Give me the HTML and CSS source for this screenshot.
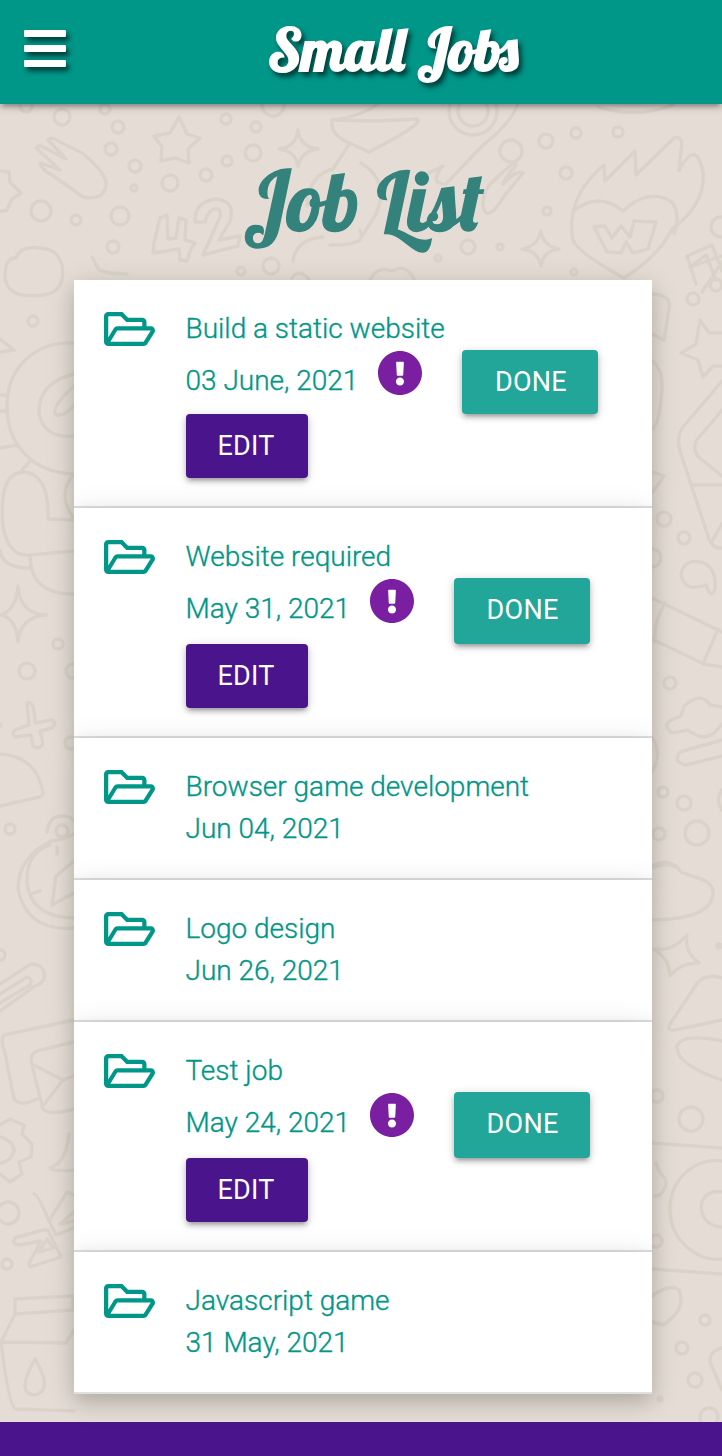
FILE: index.html
```
<!DOCTYPE html>
<html lang="en">
<head>
<meta charset="utf-8">
<title>Small Jobs</title>
<link rel="stylesheet" href="styles.css">
</head>
<body>
<svg class="doodles" width="722" height="1422" viewBox="0 0 722 1422" aria-hidden="true">
  <!-- dots and rings -->
  <circle cx="26" cy="106" r="6"/><circle cx="62" cy="117" r="8"/><circle cx="105" cy="109" r="5"/><circle cx="118" cy="127" r="6"/><circle cx="111" cy="149" r="6"/><circle cx="135" cy="166" r="6"/><circle cx="134" cy="188" r="3"/><circle cx="170" cy="183" r="8"/><circle cx="206" cy="175" r="6"/><circle cx="227" cy="161" r="5"/><circle cx="253" cy="153" r="8"/><circle cx="256" cy="127" r="5"/><circle cx="226" cy="119" r="5"/><circle cx="273" cy="105" r="11"/><circle cx="41" cy="211" r="10"/><circle cx="76" cy="220" r="5"/><circle cx="120" cy="216" r="9"/><circle cx="113" cy="247" r="6"/><circle cx="271" cy="266" r="8"/><circle cx="241" cy="271" r="4"/>
  <circle cx="511" cy="151" r="11"/><circle cx="546" cy="141" r="7"/><circle cx="576" cy="133" r="5"/><circle cx="618" cy="132" r="5"/><circle cx="566" cy="173" r="6"/><circle cx="547" cy="211" r="4"/><circle cx="468" cy="247" r="7"/><circle cx="500" cy="247" r="3"/><circle cx="438" cy="258" r="3"/><circle cx="721" cy="227" r="10"/><circle cx="574" cy="272" r="3"/>
  <circle cx="473" cy="111" r="24"/><circle cx="473" cy="111" r="15"/>
  <circle cx="33" cy="321" r="5"/><circle cx="58" cy="644" r="5"/><circle cx="27" cy="671" r="8"/><circle cx="73" cy="671" r="7"/><circle cx="71" cy="743" r="6"/><circle cx="10" cy="829" r="5"/><circle cx="0" cy="955" r="5"/><circle cx="8" cy="1213" r="11"/><circle cx="7" cy="1264" r="5"/><circle cx="0" cy="725" r="1"/>
  <circle cx="664" cy="519" r="7"/><circle cx="684" cy="538" r="6"/><circle cx="652" cy="558" r="9"/><circle cx="670" cy="683" r="6"/><circle cx="663" cy="792" r="5"/><circle cx="684" cy="803" r="7"/><circle cx="697" cy="833" r="12"/><circle cx="659" cy="834" r="6"/><circle cx="657" cy="1096" r="6"/><circle cx="691" cy="1119" r="12"/><circle cx="656" cy="1241" r="6"/><circle cx="705" cy="1320" r="5"/><circle cx="682" cy="1348" r="6"/><circle cx="695" cy="1380" r="7"/><circle cx="709" cy="1417" r="9"/><circle cx="660" cy="1399" r="2"/><circle cx="719" cy="946" r="2"/>
  <!-- top band -->
  <path d="M179 117l8 17 13 4-12 11 1 14-14-5-14 3 1-14-8-11 16-3zM298 130q2 17 20 19-17 2-20 18-2-16-19-18 17-2 19-19zM541 231q2 15 18 18-16 2-18 17-3-15-19-17 16-3 19-18z"/>
  <path d="M48 140q4-4 10 1l24 12q26 21 24 33-3 15-23 11L52 175q-10-5-12-12l20 7-24-22q3-4 9 0l21 11zM-4 170l13 2 1 10 11 11-9 6-5 11-9 2"/>
  <path d="M5 274q1-17 11-16 5-13 23-10 18 0 23 17 4 27-18 30-40 5-39-21zM92 257l7 13 10 3 18 1M160 218l7-3 1 24 8-1 3-20 7 2-1 20 10 3-4 6-4 12-7-1-1-11-26 4 1-10zM195 222q-1-20 21-23 20 2 14 22l-11 19 21-4-2 10-35 9 17-38q2-9-5-8-7 1-10 13z"/>
  <path d="M332 120q29-3 47-17M332 120q-2 13 13 21l24 11q60-31 47-33-35 3-84 1M350 143l-17 26q-20 5-25 27l-1 10M293 261q3-22 30-24M361 163q29 18 15 51l-17 27M518 103l-1 3q-7 18-35 40l-36 38q-18 0-3-18l-27 13M330 245q38 1 30-15"/>
  <path d="M483 205q-1-14 12-26l16-14q10-4 0 6l-8 12q17-14 20-10l-18 22q-19 31-22 10zM493 182l12-12M503 184l12-11M598 107q38 12 75-2"/>
  <path d="M573 240q-8-42 31-75l1 16 30-30 1 24 38-37q10-3 7 12l-2 21q17-33 24 1 3 32-31 57-12 26-48 49-47-26-51-38zM573 211q26-20 50 0 25-24 49-9 9 14 2 32M594 227l11-1 7 12 9-12 9 11 4-16 22 1-8 27-15 4-7-11-5 11-14-1zM690 267l16-12 10 25M702 292l22-33"/>
  <path d="M370 280q8-15 22-9 14-8 22 8M292 278q6-10 17 1"/>
  <!-- left margin -->
  <path d="M0 339l14 11-14 2M74 343C38 341 7 365 7 406s28 67 67 68M74 374Q38 383 39 413q5 26 35 23M74 386q-24 22-18 29 9 2 18-10M0 395h7M0 411h8M0 448l17-3M31 460l-9 10M0 550Q2 568 30 568M74 551l-44 4Q8 557 3 526q-5-55 22-54 24 3 23 47l26 1M30 555q0 40 44 39M74 474q-18 20 0 45"/>
  <path d="M18 586q2 28 28 29-26 2-28 27-2-25-18-27 16-4 18-29zM27 703q8-2 8 20l16-3q7 2 1 8l-12 3 3 12q-3 8-10 3l-2-11-15 2q-7-4 1-8l12-4zM0 754q36 2 43 38 1 4-4 5L0 806"/>
  <path d="M47 832q2-16 15-16 9 0 12 5M51 841Q18 857 18 889q9 43 56 39M51 841q12-1 23-7M27 882q-1-29 23-37M27 882q3 35 47 36M74 861l-18 15-4 29 22-12M57 847v7M31 894l9-3"/>
  <circle cx="62" cy="831" r="6"/>
  <path d="M0 984l31-20q15 0 13 15-2 5-9 7L0 1011M0 994l27-17q6 2 3 8L0 1003M74 1020L4 1035q-4 4 1 18l9 46q6 8 23 0M74 1042l-37 9q-8 3-5 14l11 44q6 7 31 0M34 1065l29 15 11-4M63 1080l-21 27"/>
  <path d="M0 1125l10-6 14 6-2 9 10 10-1 13-12 5 3 12-12 8-10-8M0 1137q14 4 14 14-3 11-14 12M74 1170q-20 2-24-2 16-5 19-34"/>
  <path d="M34 1194q4 0 15 27l18-29 7 3M49 1221l7 14 18-7M43 1230l-28 8q-4 6 4 7l22-4-12 22q0 5 4 3l28-9-13-27zM47 1239l-8 13 14-4zM74 1212l-14 12 14-3M15 1299l58-3v14l-58 4zM15 1314L1 1342q8 66 15 67l58 2M1 1342l65 1 8-13M35 1359q-20 35 0 36 19-5 0-36z"/>
  <!-- right margin -->
  <path d="M696 284l-9-28 25-11 10 26M693 266l29-10M652 294q20 1 17 15l-5 31-12-6M652 361q11 8 10 26-2 38-10 42M652 472l12 4-12 17M700 320l9 13h14M700 320l-4 24-15 9 17 7 5 17 10-11h9"/>
  <circle cx="693" cy="299" r="6"/><circle cx="716" cy="285" r="6"/>
  <path d="M722 381l-39 46q-8 11-2 27l28 85q4 10 13 9M722 410l-26 31q-4 11 5 18l21 17M691 485h31M722 524l-10 17M681 574q4-17 23-11 13 7 11 26-4 11-9-4-22 8-25-11zM652 598l70 34M665 603q-12 20-10 39M652 639l52 25 18 3M718 629l-15 35"/>
  <path d="M722 707l-12-2q-9-14-26 1l-3 10-10 4q-9 5 1 13l16-3q18 14 30-1l4-5M722 740l-42 12q-8 10 6 13l36-9M652 738q11 15 0 34M722 790q-7 10 0 20M652 866q12-7 24 0M652 868q22-8 29 4l14 5q19 5 18 17-2 25-61 26"/>
  <path d="M687 935q-3 17 12 28-19 0-29 13 0-16-16-27 19 3 33-14zM722 978q-15-5-24 4l-28 42q-4 7 5 6l47-10M722 1041q-40-8-45 5-2 18 45 34M652 1143l70 5M722 1161c-24-4-52 16-52 48s28 53 52 50M722 1192q-19-2-21 15 2 19 21 20M652 1269l70 5M652 1296q18-13 27-6 8 19-16 35l-11-3M722 1348q-13 3-12 14l12 28M656 1163l4 10q12 9 0 22l-5 1"/>
</svg>
<header class="navbar">
  <svg class="menu-icon" width="42" height="37" viewBox="0 0 42 37"><rect width="42" height="7" rx="1.3"/><rect y="15" width="42" height="7" rx="1.3"/><rect y="30" width="42" height="7" rx="1.3"/></svg>
  <svg class="brand" width="252" height="84" viewBox="0 0 252 84"><text x="-1" y="70.500" textLength="250" lengthAdjust="spacingAndGlyphs">Small Jobs</text></svg>
</header>
<main>
  <h1><svg class="page-title" width="240" height="90" viewBox="0 0 240 90"><text x="0" y="66" textLength="239.500" lengthAdjust="spacingAndGlyphs">Job List</text></svg></h1>
  <svg width="0" height="0" class="symbols">
    <symbol id="folder" viewBox="0 64 576 384"><path d="M527.9 224H480v-48c0-26.5-21.5-48-48-48H272l-64-64H48C21.5 64 0 85.5 0 112v288c0 26.5 21.5 48 48 48h400c16.5 0 31.9-8.5 40.7-22.6l79.9-128c20-31.9-3-73.4-40.7-73.4zM48 118c0-3.3 2.7-6 6-6h134.1l64 64H426c3.3 0 6 2.7 6 6v42H152c-16.8 0-32.4 8.8-41.1 23.2L48 351.4zm400 282H72l77.2-128H528z"/></symbol>
    <symbol id="alert" viewBox="8 8 496 496"><path d="M504 256c0 137-111 248-248 248S8 393 8 256C8 119 119 8 256 8s248 111 248 248zm-248 50c-25.4 0-46 20.600-46 46s20.600 46 46 46 46-20.600 46-46-20.600-46-46-46zm-43.700-165.300l7.400 136c.4 6.300 5.600 11.300 12 11.300h48.600c6.300 0 11.600-5 12-11.300l7.400-136c.3-6.900-5.100-12.700-12-12.700h-63.400c-6.900 0-12.400 5.800-12 12.700z"/></symbol>
  </svg>
  <ul class="jobs">
    <li class="job first">
      <svg class="folder"><use href="#folder"/></svg>
      <div class="details">
        <div class="name">Build a static website</div>
        <div class="meta"><span class="date">03 June, 2021</span><svg class="alert"><use href="#alert"/></svg><a class="btn done">DONE</a></div>
        <a class="btn edit">EDIT</a>
      </div>
    </li>
    <li class="job">
      <svg class="folder"><use href="#folder"/></svg>
      <div class="details">
        <div class="name">Website required</div>
        <div class="meta"><span class="date">May 31, 2021</span><svg class="alert"><use href="#alert"/></svg><a class="btn done">DONE</a></div>
        <a class="btn edit">EDIT</a>
      </div>
    </li>
    <li class="job">
      <svg class="folder"><use href="#folder"/></svg>
      <div class="details"><div class="name">Browser game development</div><div class="name">Jun 04, 2021</div></div>
    </li>
    <li class="job">
      <svg class="folder"><use href="#folder"/></svg>
      <div class="details"><div class="name">Logo design</div><div class="name">Jun 26, 2021</div></div>
    </li>
    <li class="job">
      <svg class="folder"><use href="#folder"/></svg>
      <div class="details">
        <div class="name">Test job</div>
        <div class="meta"><span class="date">May 24, 2021</span><svg class="alert"><use href="#alert"/></svg><a class="btn done">DONE</a></div>
        <a class="btn edit">EDIT</a>
      </div>
    </li>
    <li class="job">
      <svg class="folder"><use href="#folder"/></svg>
      <div class="details"><div class="name">Javascript game</div><div class="name">31 May, 2021</div></div>
    </li>
  </ul>
</main>
<footer class="footer"></footer>
</body>
</html>
```
FILE: styles.css
```
* { box-sizing: border-box; }

body {
  margin: 0;
  position: relative;
  background: #e5ddd5;
  font-family: Roboto, "Liberation Sans", sans-serif;
  font-weight: 300;
  color: #009688;
}

.doodles {
  position: absolute;
  top: 0;
  left: 0;
  z-index: -1;
  fill: none;
  stroke: #dbd3ca;
  stroke-width: 3.4;
  stroke-linejoin: round;
  stroke-linecap: round;
}

.navbar {
  height: 104px;
  padding-left: 24px;
  display: flex;
  align-items: flex-start;
  background: #009688;
  box-shadow: 0 4px 4px rgba(0, 0, 0, .14), 0 6px 2px -4px rgba(0, 0, 0, .12), 0 2px 10px rgba(0, 0, 0, .2);
}

.menu-icon {
  margin-top: 29.500px;
  fill: #fff;
  overflow: visible;
  filter: drop-shadow(3px 4px 2.500px rgba(0, 0, 0, .6));
}

.brand,
.page-title {
  display: block;
  overflow: visible;
  font-family: Lobster, "DejaVu Serif Condensed", "DejaVu Serif", serif;
  font-weight: 400;
}

.brand {
  margin-left: 203px;
  font-size: 59px;
  font-weight: 700;
  fill: #fff;
  filter: drop-shadow(3px 4px 2.500px rgba(0, 0, 0, .6));
}

h1 { margin: 0; height: 176px; padding: 61px 0 0 244px; }

.page-title { font-size: 82px; fill: #34827c; stroke: #34827c; stroke-width: 1.300px; }

.symbols { position: absolute; }

.jobs {
  width: 578px;
  margin: 0 0 28px 74px;
  padding: 0;
  list-style: none;
}

.job {
  display: flex;
  min-height: 142px;
  padding: 28px 0 0 30px;
  border-bottom: 2px solid #e0e0e0;
  background: #fff;
  box-shadow: 0 8px 17px rgba(0, 0, 0, .14), 0 6px 30px rgba(0, 0, 0, .12);
  position: relative;
}

.job:has(.meta) { min-height: 230px; }
.job.first { min-height: 228px; }

.folder { width: 51px; height: 34px; margin: 4px 31px 0 0; flex: none; fill: #009688; }

.name,
.date { -webkit-text-stroke: .35px #009688; text-indent: -.5px; }

.name { font-size: 28px; line-height: 42px; }

.meta { display: flex; height: 66px; font-size: 28px; }
.first .meta { height: 64px; }

.date { line-height: 62px; }

.alert { width: 44px; height: 44px; margin: 1px 40px 0 20px; fill: #7b1fa2; }

.btn {
  display: flex;
  align-items: center;
  justify-content: center;
  height: 64px;
  padding-right: 2px;
  border-radius: 4px;
  color: #fff;
  font-size: 27px;
  font-weight: 400;
  letter-spacing: .25px;
  box-shadow: 0 4px 4px rgba(0, 0, 0, .14), 0 6px 2px -4px rgba(0, 0, 0, .12), 0 2px 10px rgba(0, 0, 0, .2);
}

.done { width: 136px; height: 100%; padding: 0 0 2px 1px; background: #22a699; }
.first .done { padding-bottom: 0; }
.edit { width: 122px; background: #4a148c; }

.footer { height: 34px; background: #4a148c; }
```
